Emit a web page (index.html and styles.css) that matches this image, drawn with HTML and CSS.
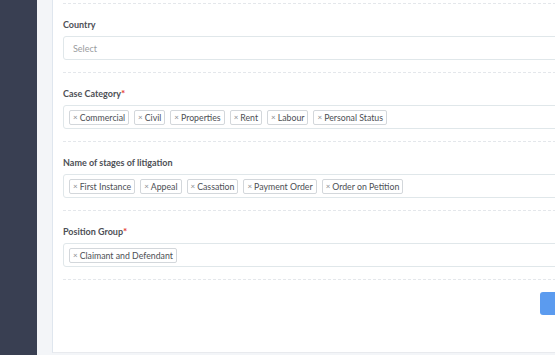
FILE: index.html
```html
<!DOCTYPE html>
<html lang="en">
  <head>
    <meta charset="UTF-8" />
    <meta name="viewport" content="width=device-width, initial-scale=1.0" />
    <title>Case settings</title>
    <link rel="stylesheet" href="styles.css">
  </head>
  <body>
    <div class="layout">
      <div class="sidebar"></div>
      <div class="content">
        <div class="card">
          <div class="field">
            <label class="field_label">Country</label>
            <div class="select">
              <span class="select_placeholder">Select</span>
            </div>
          </div>
          <div class="field">
            <label class="field_label">Case Category<span class="required">*</span></label>
            <div class="select">
              <span class="tag"><span class="tag_x">×</span>Commercial</span>
              <span class="tag"><span class="tag_x">×</span>Civil</span>
              <span class="tag"><span class="tag_x">×</span>Properties</span>
              <span class="tag"><span class="tag_x">×</span>Rent</span>
              <span class="tag"><span class="tag_x">×</span>Labour</span>
              <span class="tag"><span class="tag_x">×</span>Personal Status</span>
            </div>
          </div>
          <div class="field">
            <label class="field_label">Name of stages of litigation</label>
            <div class="select">
              <span class="tag"><span class="tag_x">×</span>First Instance</span>
              <span class="tag"><span class="tag_x">×</span>Appeal</span>
              <span class="tag"><span class="tag_x">×</span>Cassation</span>
              <span class="tag"><span class="tag_x">×</span>Payment Order</span>
              <span class="tag"><span class="tag_x">×</span>Order on Petition</span>
            </div>
          </div>
          <div class="field">
            <label class="field_label">Position Group<span class="required">*</span></label>
            <div class="select">
              <span class="tag"><span class="tag_x">×</span>Claimant and Defendant</span>
            </div>
          </div>
          <div class="card_footer">
            <button class="btn_save" aria-label="Save"></button>
          </div>
        </div>
      </div>
    </div>
  </body>
</html>
```

FILE: styles.css
```css
body {
  margin: 0;
  overflow: hidden;
  background-color: #f3f5f8;
  font-family: "Lato", "Open Sans", sans-serif;
}
.layout {
  display: flex;
  height: 355px;
}
.sidebar {
  flex: 0 0 37px;
  background-color: #393f52;
}
.content {
  flex: 0 0 auto;
  padding-left: 15px;
}
.card {
  width: 548px;
  margin-top: -10px;
  padding: 13px 10px 0;
  background-color: #fff;
  border: 1px solid #dfe6ee;
  border-top: none;
  border-bottom-color: #e8eaee;
}
.field {
  border-top: 1px dashed #e4e7eb;
  padding: 14px 0 12px;
}
.field_label {
  display: block;
  margin-bottom: 5px;
  font-size: 9px;
  line-height: 13px;
  font-weight: bold;
  color: #4d4f55;
}
.required {
  color: #e53935;
  font-size: 10px;
}
.select {
  display: flex;
  align-items: center;
  flex-wrap: wrap;
  gap: 5px;
  box-sizing: border-box;
  height: 24px;
  padding: 0 5px;
  border: 1px solid #e0e7ea;
  border-radius: 3px;
}
.select_placeholder {
  padding-left: 4px;
  font-size: 9px;
  color: #9a9ca0;
}
.tag {
  display: inline-flex;
  align-items: center;
  box-sizing: border-box;
  height: 15px;
  padding: 0 3px;
  border: 1px solid #d3d7db;
  border-radius: 2px;
  font-size: 8.75px;
  color: #4d4f55;
}
.tag_x {
  margin-right: 2px;
  font-size: 8px;
  color: #8a8c90;
}
.card_footer {
  display: flex;
  justify-content: flex-end;
  border-top: 1px dashed #e4e7eb;
  padding: 12px 0 37px;
}
.btn_save {
  width: 71px;
  height: 23px;
  border: none;
  border-radius: 3px;
  background-color: #5b9bef;
}
```
